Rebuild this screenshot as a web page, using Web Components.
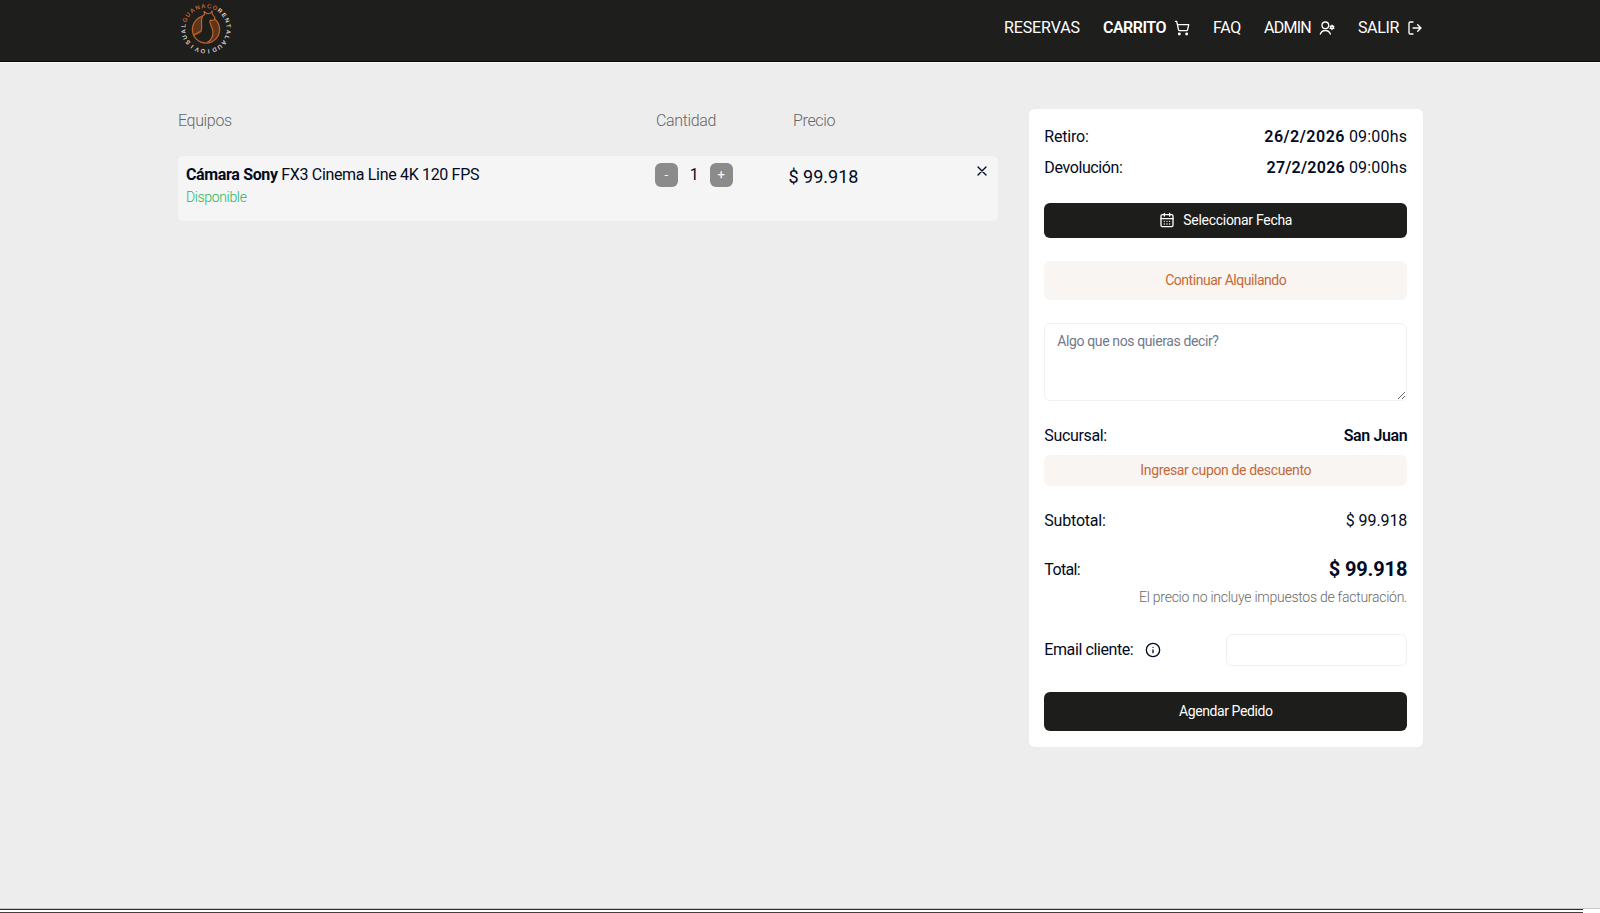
<!DOCTYPE html>
<html lang="es">
<head>
<meta charset="utf-8">
<title>Guanaco Rental Audiovisual - Carrito</title>
<style>
  * { box-sizing: border-box; }
  html, body { margin: 0; height: 100%; }
  body {
    display: flex;
    flex-direction: column;
    overflow: hidden;
    background: #ededed;
    color: #020a24;
    font: 400 16px/24px Roboto, "Liberation Sans", sans-serif;
  }
  main {
    flex: 1;
    display: flex;
    align-items: flex-start;
    justify-content: space-between;
    width: 1245px;
    margin-left: 178px;
    padding-top: 46px;
  }
</style>
</head>
<body>
<site-header>
  <nav-link style="--track: -.1px">RESERVAS</nav-link>
  <nav-link icon="cart" active style="--track: -.5px">CARRITO</nav-link>
  <nav-link style="--track: -.25px">FAQ</nav-link>
  <nav-link icon="admin" style="--track: -.75px">ADMIN</nav-link>
  <nav-link icon="exit" style="--track: -.35px">SALIR</nav-link>
</site-header>
<main>
  <cart-list>
    <cart-item brand="Cámara Sony" name="FX3 Cinema Line 4K 120 FPS" price="$ 99.918" quantity="1"></cart-item>
  </cart-list>
  <order-summary></order-summary>
</main>
<page-edge></page-edge>

<script>
const ICONS = {
  cart: '<circle cx="8" cy="21" r="1.2"/><circle cx="19" cy="21" r="1.2"/><path d="M2.05 2.05h2l2.66 12.42a2 2 0 0 0 2 1.58h9.78a2 2 0 0 0 1.95-1.57l1.65-7.43H5.12"/>',
  admin: '<path d="M2 21a8 8 0 0 1 15 0"/><circle cx="9.5" cy="8" r="5"/><circle cx="19.5" cy="11" r="2"/><path d="M19.5 7.800v1M19.5 13.200v1M16.700 9.400l.9.500M21.400 12.100l.9.500M16.700 12.600l.9-.5M21.400 9.900l.9-.5"/>',
  exit: '<path d="M9 21H5a2 2 0 0 1-2-2V5a2 2 0 0 1 2-2h4M16 17l5-5-5-5M21 12H9"/>',
  calendar: '<rect x="3" y="4" width="18" height="18" rx="2"/><path d="M8 2v4M16 2v4M3 10h18M8 14h.01M12 14h.01M16 14h.01M8 18h.01M12 18h.01M16 18h.01"/>',
  close: '<path d="M18 6 6 18M6 6l12 12"/>',
  info: '<circle cx="12" cy="12" r="10"/><path d="M12 16v-4M12 8h.01"/>'
};

class UiIcon extends HTMLElement {
  constructor() {
    super();
    this.attachShadow({ mode: "open" });
  }

  connectedCallback() {
    this.shadowRoot.innerHTML = `
      <style>
        :host { display: block; flex: none; width: 16px; height: 16px; }
        svg { display: block; width: 100%; height: 100%; }
      </style>
      <svg viewBox="0 0 24 24" fill="none" stroke="currentColor" stroke-width="2"
        stroke-linecap="round" stroke-linejoin="round">${ICONS[this.getAttribute("name")]}</svg>
    `;
  }
}

class BrandLogo extends HTMLElement {
  constructor() {
    super();
    this.attachShadow({ mode: "open" }).innerHTML = `
      <style>
        :host { display: block; width: 56px; height: 56px; }
        svg { display: block; margin-left: -.5px; }
        text { font: 700 6px "Liberation Sans Narrow", "Liberation Sans", sans-serif; }
      </style>
      <svg width="56" height="56" viewBox="0 0 56 56">
        <circle cx="28" cy="29.5" r="13.6" fill="#5f361c" stroke="#b9602b" stroke-width="1.3"/>
        <path d="M24.500 16l2-1.500L26 11.500l3 2.300 3.500-.6L34 11l.4 3.500 2.600 3-1 2.500-4 .4c-1 4.500 3 7 3 12 0 5-2.500 8.500-7.500 9.500-5 0-9-3-11-7 5 .5 7.500-2 7.500-6.500 0-4.500-1.500-8 .5-12.400z"
          fill="#1d1d1b"/>
        <path d="M24.500 16l2-1.500L26 11.500l3 2.300 3.500-.6L34 11l.4 3.500 2.600 3-1 2.500-4 .4c-1 4.500 3 7 3 12 0 4-2 7.500-5.500 10M24.500 16c-3 7 1 10-1.500 15l-7 4"
          fill="none" stroke="#c4682f" stroke-width="1.100" stroke-linejoin="round"/>
        <g id="letters"></g>
      </svg>
    `;
    this.drawRing();
  }

  // One letter every 15 degrees, clockwise, feet towards the centre
  drawRing() {
    this.shadowRoot.querySelector("#letters").innerHTML = [..."GUANACORENTALAUDIOVISUAL"].map((letter, i) => `
      <text x="28" y="8" text-anchor="middle" fill="${i < 7 ? "#bd6430" : "#d5d3cf"}"
        transform="rotate(${-67 + i * 15} 28 28.700)">${letter}</text>`).join("");
  }
}

class NavLink extends HTMLElement {
  constructor() {
    super();
    this.attachShadow({ mode: "open" });
  }

  connectedCallback() {
    const icon = this.getAttribute("icon");
    this.shadowRoot.innerHTML = `
      <style>
        :host { display: flex; align-items: center; gap: 8px; color: #fff; }
        :host([active]) { font-weight: 600; }
        span { letter-spacing: var(--track, 0); }
      </style>
      <span><slot></slot></span>
      ${icon ? `<ui-icon name="${icon}"></ui-icon>` : ""}
    `;
  }
}

class SiteHeader extends HTMLElement {
  constructor() {
    super();
    this.attachShadow({ mode: "open" }).innerHTML = `
      <style>
        :host {
          display: block;
          height: 63px;
          background: #1e1e1c;
          border-bottom: 1px solid #fafafa;
          box-shadow: inset 0 -1px #080808;
          box-sizing: border-box;
        }
        .bar {
          display: flex;
          align-items: center;
          justify-content: space-between;
          width: 1245px;
          height: 56px;
          margin-left: 178px;
        }
        nav { display: flex; gap: 23px; }
      </style>
      <div class="bar">
        <brand-logo></brand-logo>
        <nav><slot></slot></nav>
      </div>
    `;
  }
}

class CartList extends HTMLElement {
  constructor() {
    super();
    this.attachShadow({ mode: "open" }).innerHTML = `
      <style>
        :host { display: block; width: 820px; }
        .head {
          display: grid;
          grid-template-columns: 478px 137px 1fr;
          margin-bottom: 23px;
          color: #666;
          font-weight: 300;
          letter-spacing: -.35px;
        }
      </style>
      <div class="head"><span>Equipos</span><span>Cantidad</span><span>Precio</span></div>
      <slot></slot>
    `;
  }
}

class CartItem extends HTMLElement {
  constructor() {
    super();
    this.attachShadow({ mode: "open" });
  }

  connectedCallback() {
    this.shadowRoot.innerHTML = `
      <style>
        :host {
          display: grid;
          grid-template-columns: 468.5px 134px 1fr auto;
          align-items: start;
          box-sizing: border-box;
          height: 65px;
          padding: 7px 8px 0 8px;
          border-radius: 5px;
          background: #f5f5f5;
        }
        .name { letter-spacing: -.33px; }
        b { letter-spacing: -.35px; }
        .stock { color: #25b560; font-size: 14px; font-weight: 300; line-height: 20px; letter-spacing: -.35px; }
        .quantity { display: flex; align-items: center; height: 24px; }
        .quantity span { width: 30.5px; padding-left: 1px; text-align: center; }
        button {
          width: 23.500px;
          height: 23.500px;
          padding: 0;
          border: 0;
          border-radius: 6px;
          background: #8b8b8b;
          color: #fff;
          font: 400 13px/22px Roboto, sans-serif;
        }
        .price { padding-top: 1px; font-size: 18px; line-height: 26px; }
      </style>
      <div>
        <div class="name"><b>${this.getAttribute("brand")}</b> ${this.getAttribute("name")}</div>
        <div class="stock">Disponible</div>
      </div>
      <div class="quantity">
        <button>-</button><span>${this.getAttribute("quantity")}</span><button>+</button>
      </div>
      <div class="price">${this.getAttribute("price")}</div>
      <ui-icon name="close"></ui-icon>
    `;
  }
}

class UiButton extends HTMLElement {
  constructor() {
    super();
    this.attachShadow({ mode: "open" }).innerHTML = `
      <style>
        :host { display: block; }
        button {
          display: flex;
          align-items: center;
          justify-content: center;
          gap: 8px;
          width: 100%;
          height: var(--height);
          padding: 0 0 1px;
          border: 0;
          border-radius: 6px;
          background: #1d1d1b;
          color: #fff;
          font: 400 14px/20px Roboto, sans-serif;
          letter-spacing: var(--track, 0);
        }
        :host([soft]) button { background: #f9f5f2; color: #c46a38; }
      </style>
      <button><slot name="icon"></slot><slot></slot></button>
    `;
  }
}

class SummaryRow extends HTMLElement {
  constructor() {
    super();
    this.attachShadow({ mode: "open" }).innerHTML = `
      <style>
        :host { display: flex; align-items: center; justify-content: space-between; height: 24px; }
        .label { display: flex; align-items: center; letter-spacing: var(--track, 0); }
      </style>
      <span class="label"><slot name="label"></slot></span>
      <span><slot></slot></span>
    `;
  }
}

class OrderSummary extends HTMLElement {
  constructor() {
    super();
    this.attachShadow({ mode: "open" }).innerHTML = `
      <style>
        * { box-sizing: border-box; }
        :host {
          display: flex;
          flex-direction: column;
          box-sizing: border-box;
          width: 394.5px;
          height: 638px;
          padding: 16px 15.800px 0;
          border-radius: 6px;
          background: #fff;
        }
        b { font-weight: 600; }
        .date b { letter-spacing: .5px; }
        .date i { font-style: normal; letter-spacing: .2px; }
        textarea, input {
          border: 1px solid #f0f0f1;
          border-radius: 6px;
          background: #fff;
          font: 400 14px/20px Roboto, sans-serif;
        }
        textarea {
          display: block;
          width: 100%;
          height: 77.500px;
          margin: 23.500px 0 23px;
          padding: 7px 12px;
          letter-spacing: -.38px;
        }
        textarea::placeholder { color: #71798b; }
        input { display: block; width: 181.500px; height: 31.500px; }
        .total { font-size: 20px; font-weight: 700; letter-spacing: -.15px; }
        .note {
          margin: 5px 0 27px;
          color: #6a6a6a;
          font-size: 14px;
          font-weight: 300;
          line-height: 20px;
          letter-spacing: -.26px;
          text-align: right;
        }
        .info { margin-left: 12px; }
      </style>
      <summary-row class="date" style="--track: -.2px">
        <span slot="label">Retiro:</span><b>26/2/2026</b> <i>09:00hs</i>
      </summary-row>
      <summary-row class="date" style="--track: -.38px; margin-top: 7px">
        <span slot="label">Devolución:</span><b style="letter-spacing: .25px">27/2/2026</b> <i>09:00hs</i>
      </summary-row>
      <ui-button style="--height: 35.500px; --track: -.29px; margin-top: 22.500px">
        <ui-icon slot="icon" name="calendar"></ui-icon>Seleccionar Fecha
      </ui-button>
      <ui-button soft style="--height: 38.500px; --track: -.46px; margin-top: 23.400px">Continuar Alquilando</ui-button>
      <textarea placeholder="Algo que nos quieras decir?"></textarea>
      <summary-row style="--track: -.35px">
        <span slot="label">Sucursal:</span><b style="letter-spacing: -.4px">San Juan</b>
      </summary-row>
      <ui-button soft style="--height: 31.500px; --track: -.36px; margin-top: 7px">Ingresar cupon de descuento</ui-button>
      <summary-row style="--track: -.2px; margin-top: 23px">
        <span slot="label">Subtotal:</span><span style="letter-spacing: -.1px">$ 99.918</span>
      </summary-row>
      <summary-row style="--track: -.65px; margin-top: 25px">
        <span slot="label">Total:</span><span class="total">$ 99.918</span>
      </summary-row>
      <div class="note">El precio no incluye impuestos de facturación.</div>
      <summary-row style="--track: -.4px; height: 31.500px">
        <span slot="label">Email cliente:</span><ui-icon class="info" slot="label" name="info"></ui-icon>
        <input type="email">
      </summary-row>
      <ui-button style="--height: 39px; --track: -.4px; margin-top: 26.500px">Agendar Pedido</ui-button>
    `;
  }
}

// Strip along the bottom of the window
class PageEdge extends HTMLElement {
  constructor() {
    super();
    this.attachShadow({ mode: "open" }).innerHTML = `
      <style>
        :host {
          display: block;
          height: 5px;
          background: #fff;
          border-top: 1px solid #c8c8c8;
          box-sizing: border-box;
        }
        div {
          box-sizing: border-box;
          width: 1583px;
          height: 4px;
          border-top: 1px solid #2b2b2b;
          border-bottom: 1px solid #453f42;
        }
      </style>
      <div></div>
    `;
  }
}

customElements.define("ui-icon", UiIcon);
customElements.define("brand-logo", BrandLogo);
customElements.define("nav-link", NavLink);
customElements.define("site-header", SiteHeader);
customElements.define("cart-list", CartList);
customElements.define("cart-item", CartItem);
customElements.define("ui-button", UiButton);
customElements.define("summary-row", SummaryRow);
customElements.define("order-summary", OrderSummary);
customElements.define("page-edge", PageEdge);
</script>
</body>
</html>
